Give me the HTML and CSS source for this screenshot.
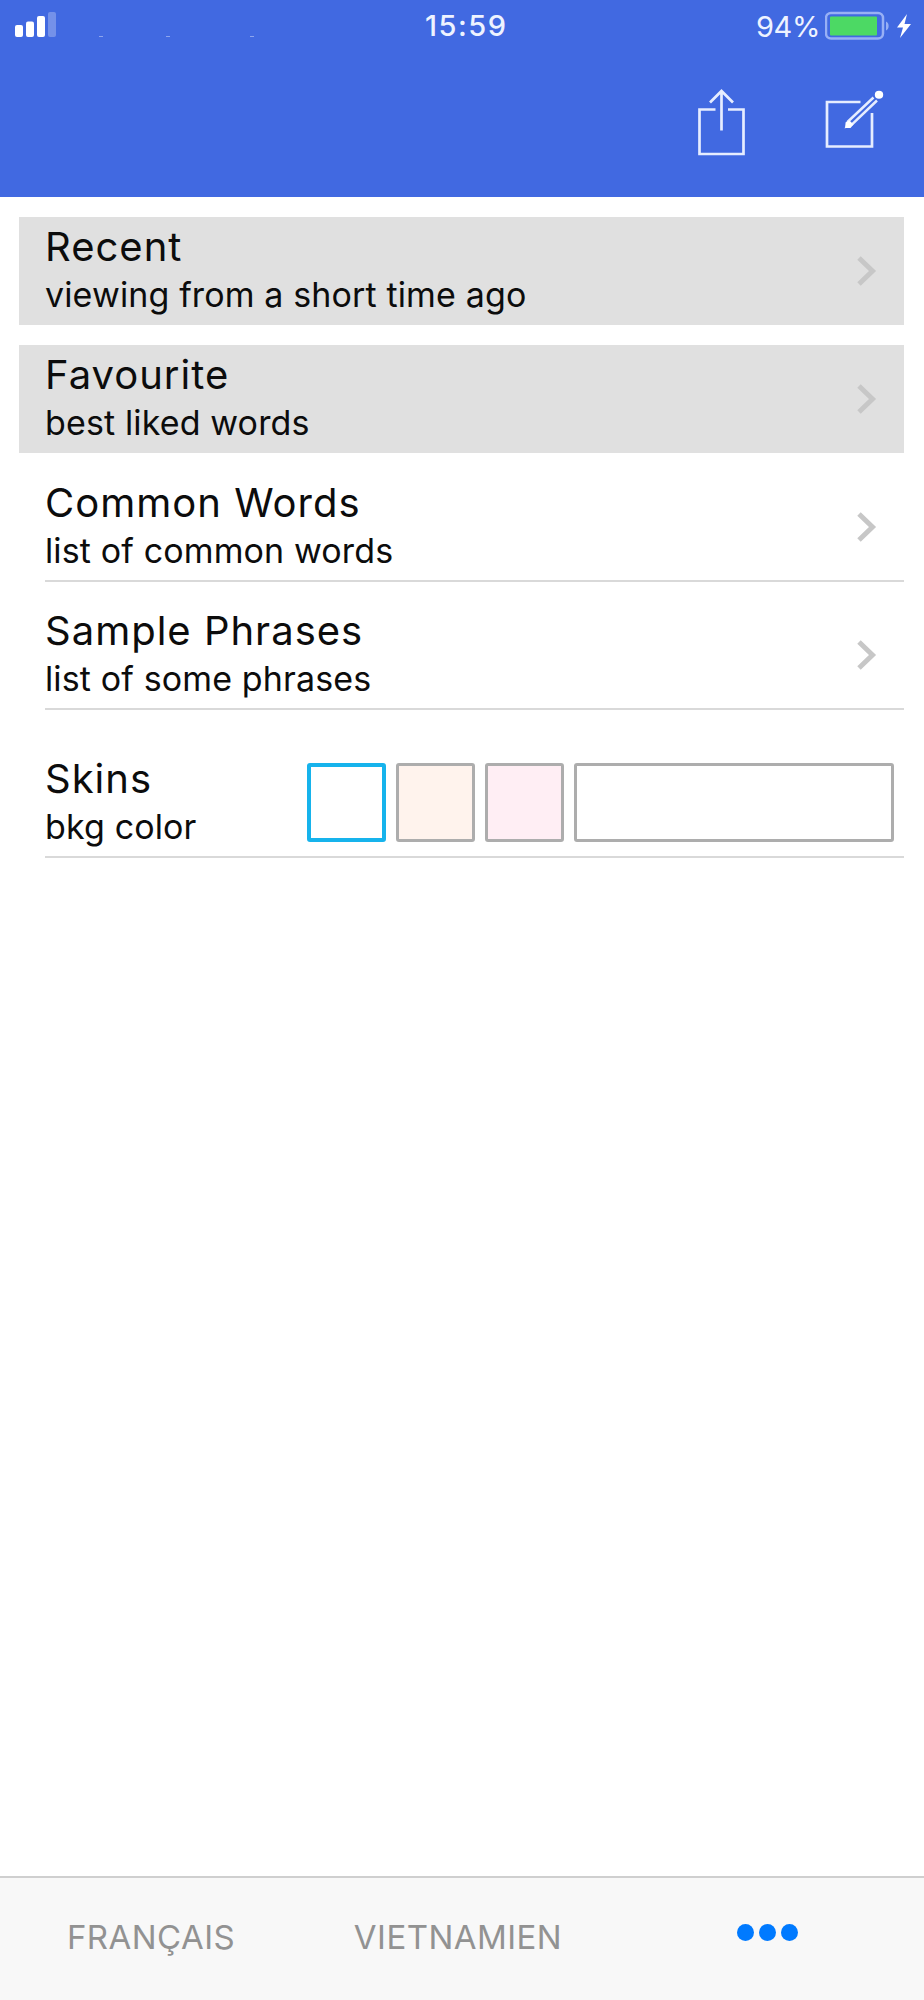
FILE: index.html
```html
<!DOCTYPE html>
<html lang="en">
<head>
<meta charset="utf-8">
<title>Dictionary</title>
<link rel="stylesheet" href="styles.css">
</head>
<body>
<div class="screen">
  <header class="header">
    <div class="status">
      <div class="status-left">
        <svg class="signal" width="42" height="26" viewBox="0 0 42 26" fill="#fff"><rect x="0" y="13" width="8" height="12" rx="2"/><rect x="11" y="9.5" width="8" height="15.500" rx="2"/><rect x="22" y="4" width="8" height="21" rx="2"/><rect x="33" y="0" width="8" height="25" rx="2" opacity=".27"/></svg>
        <span class="speck"></span><span class="speck"></span><span class="speck"></span>
      </div>
      <div class="clock">15:59</div>
      <div class="status-right">
        <span class="percent">94%</span>
        <svg width="88" height="30" viewBox="0 0 88 30"><rect x="1" y="2" width="57" height="25.500" rx="5" fill="none" stroke="#98b0f5" stroke-width="2.500"/><rect x="5" y="5.500" width="47" height="19" rx="1" fill="#4cd964"/><path d="M61 10.500c3.500 1 3.500 8 0 9z" fill="#98b0f5"/><path d="M82 3 72 16.500h6L75 27l11-14h-6.500z" fill="#fff"/></svg>
      </div>
    </div>
    <div class="toolbar">
      <svg width="48" height="68" viewBox="0 0 48 68" fill="none" stroke="#e6edff" stroke-width="2.700"><path d="M17.500 21.500H1.500V66H45.500V21.500H30"/><path d="M23.500 42.500V3M12 14.500 23.500 3 35 14.500"/></svg>
      <svg width="60" height="60" viewBox="0 0 60 60" fill="none" stroke="#e6edff" stroke-width="2.700"><path d="M36.500 14H3V58.500H48V25"/><path d="M49.500 9.500 24 33.500 22.500 38.500 28 36.500 53 12.500" stroke-width="2.500"/><path d="M21.500 40V34.500l4-2 4 4-3 3.500z" fill="#fff" stroke="none"/><ellipse cx="55" cy="6.800" rx="4.200" ry="4" fill="#fff" stroke="none"/></svg>
    </div>
  </header>
  <main class="list">
    <section class="row shaded">
      <div class="labels"><h2>Recent</h2><p>viewing from a short time ago</p></div>
      <svg class="chevron" width="22" height="34" viewBox="0 0 22 34"><path d="M3 4 16.500 17 3 30"/></svg>
    </section>
    <section class="row shaded">
      <div class="labels"><h2>Favourite</h2><p>best liked words</p></div>
      <svg class="chevron" width="22" height="34" viewBox="0 0 22 34"><path d="M3 4 16.500 17 3 30"/></svg>
    </section>
    <section class="row">
      <div class="labels"><h2>Common Words</h2><p>list of common words</p></div>
      <svg class="chevron" width="22" height="34" viewBox="0 0 22 34"><path d="M3 4 16.500 17 3 30"/></svg>
    </section>
    <section class="row">
      <div class="labels"><h2>Sample Phrases</h2><p>list of some phrases</p></div>
      <svg class="chevron" width="22" height="34" viewBox="0 0 22 34"><path d="M3 4 16.500 17 3 30"/></svg>
    </section>
    <section class="row skins">
      <div class="labels"><h2>Skins</h2><p>bkg color</p></div>
      <div class="swatches"><span class="swatch selected"></span><span class="swatch peach"></span><span class="swatch pink"></span><span class="swatch wide"></span></div>
    </section>
  </main>
  <nav class="tabs">
    <a class="tab french">FRANÇAIS</a>
    <a class="tab viet">VIETNAMIEN</a>
    <a class="tab more"><i></i><i></i><i></i></a>
  </nav>
</div>
</body>
</html>
```
FILE: styles.css
```css
* { box-sizing: border-box; }
body { margin: 0; background: #fff; font-family: Inter, "Liberation Sans", sans-serif; }
.screen { width: 924px; height: 2000px; display: flex; flex-direction: column; }
.header { height: 197px; background: #4169e1; color: #eef3ff; }
.status { height: 52px; display: grid; grid-template-columns: 1fr 90px 1fr; }
.status-left { padding: 12px 0 0 15px; display: flex; }
.speck { width: 4px; height: 1px; margin: 24px 0 0 42px; background: #8da5ee; }
.speck + .speck { margin-left: 63px; }
.speck + .speck + .speck { margin-left: 80px; }
.clock { font-size: 29px; font-weight: 500; line-height: 52px; white-space: nowrap; letter-spacing: 1.5px; padding-left: 8px; }
.status-right { display: flex; align-items: center; justify-content: flex-end; padding-right: 11px; }
.percent { font-size: 29px; letter-spacing: -0.4px; margin-right: 5px; }
.toolbar { display: flex; justify-content: flex-end; align-items: flex-start; padding: 36px 40px 0 0; gap: 78px; }
.list { flex: 1; padding: 20px 20px 0 19px; }
.row { height: 108px; margin-bottom: 20px; display: flex; justify-content: space-between; padding: 0 26px; }
.shaded { background: #e0e0e0; }
.row:not(.shaded) { height: 109px; margin: 0 0 19px 26px; padding-left: 0; border-bottom: 2px solid #d9d9d9; }
.labels { padding-top: 6px; color: #0c0c0c; white-space: nowrap; }
h2 { margin: 0; font-size: 40px; font-weight: 400; line-height: 48px; letter-spacing: 1px; }
p { margin: 0; font-size: 34px; line-height: 48px; letter-spacing: 0.13px; }
.chevron { margin-top: 37px; fill: none; stroke: #c7c7c7; stroke-width: 5; }
.row.skins { margin-top: 39px; padding-right: 10px; }
.swatches { display: flex; gap: 10px; padding-top: 14px; }
.swatch { width: 79px; height: 79px; border: 3px solid #adadad; border-radius: 3px; }
.selected { border: 4px solid #16b3ec; }
.peach { background: #fff3ed; }
.pink { background: #ffeef4; }
.wide { width: 320px; }
.tabs { height: 124px; border-top: 2px solid #cfcfcf; background: #f8f8f8; display: grid; grid-template-columns: 302px 312px 310px; color: #929292; font-size: 33px; letter-spacing: 0.45px; }
.tab { display: flex; justify-content: center; padding-top: 39px; line-height: 40px; }
.more { gap: 5px; padding: 46px 4px 0 0; }
.more i { width: 17px; height: 17px; border-radius: 50%; background: #007aff; }
```
